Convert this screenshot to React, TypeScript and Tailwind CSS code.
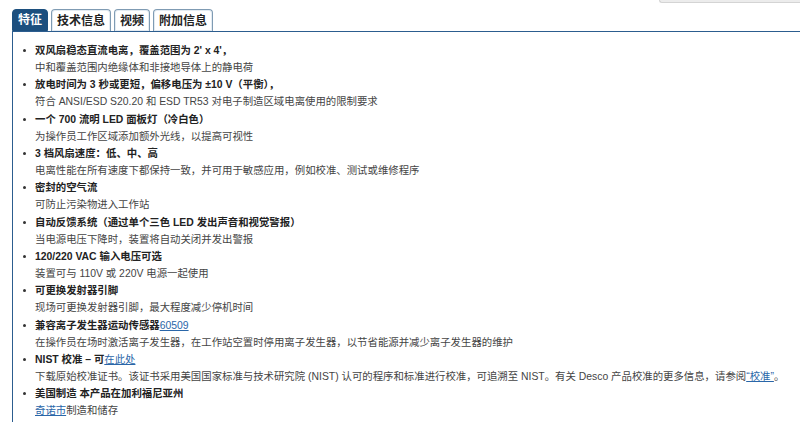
import { ReactNode } from 'react';

type Feature = {
  title: ReactNode;
  desc: ReactNode;
};

const link = 'text-[#2a66a8] underline';

const features: Feature[] = [
  {
    title: "双风扇稳态直流电离，覆盖范围为 2' x 4'，",
    desc: '中和覆盖范围内绝缘体和非接地导体上的静电荷',
  },
  {
    title: '放电时间为 3 秒或更短，偏移电压为 ±10 V（平衡），',
    desc: '符合 ANSI/ESD S20.20 和 ESD TR53 对电子制造区域电离使用的限制要求',
  },
  {
    title: '一个 700 流明 LED 面板灯（冷白色）',
    desc: '为操作员工作区域添加额外光线，以提高可视性',
  },
  {
    title: '3 档风扇速度：低、中、高',
    desc: '电离性能在所有速度下都保持一致，并可用于敏感应用，例如校准、测试或维修程序',
  },
  {
    title: '密封的空气流',
    desc: '可防止污染物进入工作站',
  },
  {
    title: '自动反馈系统（通过单个三色 LED 发出声音和视觉警报）',
    desc: '当电源电压下降时，装置将自动关闭并发出警报',
  },
  {
    title: '120/220 VAC 输入电压可选',
    desc: '装置可与 110V 或 220V 电源一起使用',
  },
  {
    title: '可更换发射器引脚',
    desc: '现场可更换发射器引脚，最大程度减少停机时间',
  },
  {
    title: (
      <>
        兼容离子发生器运动传感器<span className={`${link} font-normal`}>60509</span>
      </>
    ),
    desc: '在操作员在场时激活离子发生器，在工作站空置时停用离子发生器，以节省能源并减少离子发生器的维护',
  },
  {
    title: (
      <>
        NIST 校准 – 可<span className={`${link} font-normal`}>在此处</span>
      </>
    ),
    desc: (
      <>
        下载原始校准证书。该证书采用美国国家标准与技术研究院 (NIST) 认可的程序和标准进行校准，可追溯至 NIST。有关 Desco 产品校准的更多信息，请参阅
        <span className={link}>“校准”</span>。
      </>
    ),
  },
  {
    title: '美国制造 本产品在加利福尼亚州',
    desc: (
      <>
        <span className={link}>奇诺市</span>制造和储存
      </>
    ),
  },
];

const tabs = ['特征', '技术信息', '视频', '附加信息'];

export default function App() {
  return (
    <div
      className="relative w-[800px] h-[422px] overflow-hidden bg-white"
      style={{ fontFamily: '"Liberation Sans", Arial, "Noto Sans CJK SC", sans-serif' }}
    >
      <div className="absolute top-0 right-0 w-[141px] h-[3px] bg-[#ececec] border-l border-b border-[#d4d4d4] rounded-bl-[3px]" />

      <div className="pl-[12px] pt-[9px]">
        <div className="flex items-end gap-[3px]">
          {tabs.map((tab, i) => (
            <div
              key={tab}
              className={
                i === 0
                  ? 'h-[22px] px-[5px] flex items-center rounded-t-[4px] bg-[#1c4f7e] text-white text-[12px] font-bold border border-[#1c4f7e]'
                  : 'h-[22px] px-[5px] flex items-center rounded-t-[4px] bg-white text-[#222] text-[12px] font-bold border border-b-0 border-[#7f9bb3] shadow-[inset_0_0_0_1px_#e3ebf2]'
              }
            >
              {tab}
            </div>
          ))}
        </div>

        <div className="border-t border-l border-[#2c5d8f] h-[400px] pt-[10px]">
          <ul className="text-[10.4px]">
            {features.map((f, i) => (
              <li key={i} className="flex">
                <div className="w-[22px] h-[17.15px] flex items-center pl-[9.5px]">
                  <span className="w-[3px] h-[3px] rounded-full bg-[#333]" />
                </div>
                <div className="leading-[17.15px] whitespace-nowrap">
                  <div className="font-bold text-[#222]">{f.title}</div>
                  <div className="text-[#444]">{f.desc}</div>
                </div>
              </li>
            ))}
          </ul>
        </div>
      </div>
    </div>
  );
}
